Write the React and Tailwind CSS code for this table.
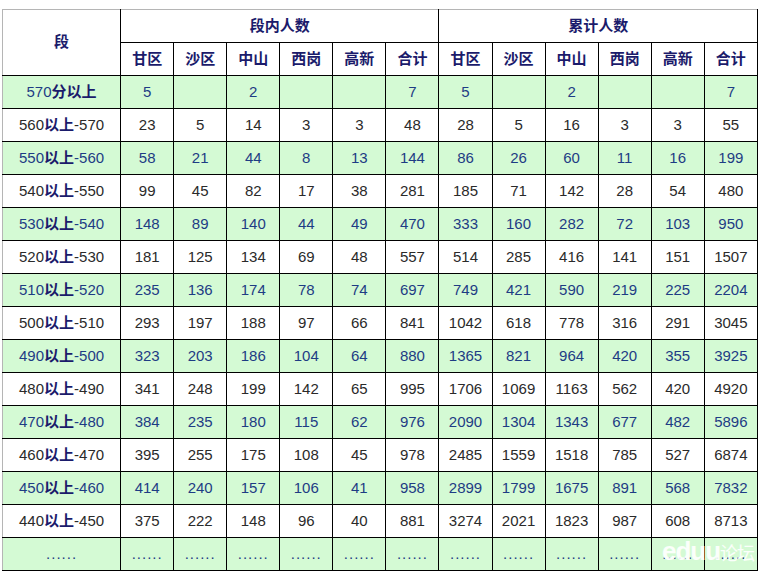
import React from "react";

const rows = [
  ["570", "分以上", "", ["5", "", "2", "", "", "7", "5", "", "2", "", "", "7"]],
  ["560", "以上", "-570", ["23", "5", "14", "3", "3", "48", "28", "5", "16", "3", "3", "55"]],
  ["550", "以上", "-560", ["58", "21", "44", "8", "13", "144", "86", "26", "60", "11", "16", "199"]],
  ["540", "以上", "-550", ["99", "45", "82", "17", "38", "281", "185", "71", "142", "28", "54", "480"]],
  ["530", "以上", "-540", ["148", "89", "140", "44", "49", "470", "333", "160", "282", "72", "103", "950"]],
  ["520", "以上", "-530", ["181", "125", "134", "69", "48", "557", "514", "285", "416", "141", "151", "1507"]],
  ["510", "以上", "-520", ["235", "136", "174", "78", "74", "697", "749", "421", "590", "219", "225", "2204"]],
  ["500", "以上", "-510", ["293", "197", "188", "97", "66", "841", "1042", "618", "778", "316", "291", "3045"]],
  ["490", "以上", "-500", ["323", "203", "186", "104", "64", "880", "1365", "821", "964", "420", "355", "3925"]],
  ["480", "以上", "-490", ["341", "248", "199", "142", "65", "995", "1706", "1069", "1163", "562", "420", "4920"]],
  ["470", "以上", "-480", ["384", "235", "180", "115", "62", "976", "2090", "1304", "1343", "677", "482", "5896"]],
  ["460", "以上", "-470", ["395", "255", "175", "108", "45", "978", "2485", "1559", "1518", "785", "527", "6874"]],
  ["450", "以上", "-460", ["414", "240", "157", "106", "41", "958", "2899", "1799", "1675", "891", "568", "7832"]],
  ["440", "以上", "-450", ["375", "222", "148", "96", "40", "881", "3274", "2021", "1823", "987", "608", "8713"]],
];

const districts = ["甘区", "沙区", "中山", "西岗", "高新", "合计"];

export default function App() {
  const font = { fontFamily: '"Liberation Sans", "Noto Sans CJK SC", sans-serif' };
  return (
    <div className="w-[760px] h-[572px] bg-white pt-[9px] pl-[2px] relative overflow-hidden" style={font}>
      <table className="border-collapse table-fixed w-[756px] text-[15px]">
        <colgroup>
          <col className="w-[118px]" />
          {Array.from({ length: 12 }).map((_, i) => (
            <col key={i} className="w-[53px]" />
          ))}
        </colgroup>
        <thead>
          <tr className="h-[33px]">
            <th
              rowSpan={2}
              className="border border-black border-t-[#b5b5b5] border-l-[#b5b5b5] p-0 text-center align-middle font-bold text-[#1b1b6b] text-[15px]"
            >
              段
            </th>
            <th colSpan={6} className="border border-black border-t-[#b5b5b5] p-0 text-center align-middle font-bold text-[#1b1b6b] text-[15px]">
              段内人数
            </th>
            <th colSpan={6} className="border border-black border-t-[#b5b5b5] p-0 text-center align-middle font-bold text-[#1b1b6b] text-[15px]">
              累计人数
            </th>
          </tr>
          <tr className="h-[33px]">
            {[...districts, ...districts].map((d, i) => (
              <th key={i} className="border border-black p-0 text-center align-middle font-bold text-[#1b1b6b] text-[15px]">
                {d}
              </th>
            ))}
          </tr>
        </thead>
        <tbody>
          {rows.map(([a, b, c, vals], ri) => {
            const green = ri % 2 === 0;
            const txt = green ? "text-[#1e3c84]" : "text-[#2a2a2a]";
            return (
              <tr key={ri} className={`h-[33px] ${green ? "bg-[#d4fad4]" : "bg-white"}`}>
                <td className={`border border-black border-l-[#b5b5b5] p-0 text-center align-middle ${txt}`}>
                  {a}
                  <span className="font-bold text-[#1b1b6b]">{b}</span>
                  {c}
                </td>
                {vals.map((v, i) => (
                  <td key={i} className={`border border-black p-0 text-center align-middle ${txt}`}>
                    {v}
                  </td>
                ))}
              </tr>
            );
          })}
          <tr className="h-[33px] bg-[#d4fad4]">
            <td className="border border-black border-l-[#b5b5b5] p-0 text-center align-middle text-[#1e3c84] tracking-[1px]">
              ......
            </td>
            {Array.from({ length: 12 }).map((_, i) => (
              <td key={i} className="border border-black p-0 text-center align-middle text-[#1e3c84] tracking-[1px]">
                ......
              </td>
            ))}
          </tr>
        </tbody>
      </table>
      <div
        className="absolute left-[662px] top-[538px] text-white/90 font-bold text-[26px] leading-none tracking-[-1px] flex items-baseline"
        style={{ fontFamily: '"Liberation Sans", "Noto Sans CJK SC", sans-serif' }}
      >
        <span>eduu</span>
        <span className="text-[18px] font-normal">论坛</span>
      </div>
    </div>
  );
}
